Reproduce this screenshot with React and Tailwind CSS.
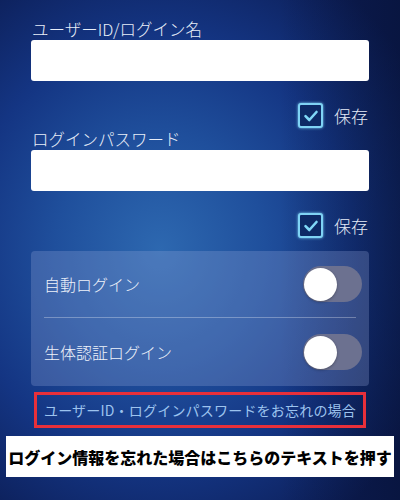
import React from "react";

function Check() {
  return (
    <div className="w-[25px] h-[25px] rounded-[3px] border-2 border-[#7fd3f5] bg-[#0d2a66] flex items-center justify-center shadow-[0_0_3px_#7fd3f5]">
      <svg width="16" height="16" viewBox="0 0 16 16" fill="none">
        <path d="M2.5 8.2 L6.3 12 L13.5 4" stroke="#7fd8f7" strokeWidth="2.6" strokeLinecap="round" strokeLinejoin="round" />
      </svg>
    </div>
  );
}

function SaveRow() {
  return (
    <div className="flex justify-end items-center gap-[11px] pr-[32px]">
      <Check />
      <span className="text-[17px] text-[#e6ecf7] leading-none font-light">保存</span>
    </div>
  );
}

function Toggle() {
  return (
    <div className="w-[59px] h-[36px] rounded-full bg-[#6c7190] flex items-center pl-[1px]">
      <div className="w-[33px] h-[33px] rounded-full bg-white shadow-[0_1px_3px_rgba(0,0,0,0.3)]" />
    </div>
  );
}

export default function App() {
  return (
    <div
      className="w-[400px] h-[500px] overflow-hidden relative bg-[radial-gradient(ellipse_300px_330px_at_160px_250px,#2d68b0_0%,#1f4f9c_35%,#143583_65%,#0c1d55_100%)]"
      style={{ fontFamily: '"Noto Sans CJK JP", "Noto Sans", sans-serif' }}
    >
      <div className="absolute inset-0 bg-[linear-gradient(90deg,rgba(0,0,0,0)_70%,rgba(5,12,40,0.45)_100%)]" />
      <div className="relative flex flex-col">
        <div className="pt-[18px] pl-[32px] text-[16.5px] leading-[22px] text-[#e8eef8] font-light">ユーザーID/ログイン名</div>
        <div className="mx-[31px] mt-[0px] h-[41px] bg-white rounded-[3px]" />
        <div className="mt-[22px]"><SaveRow /></div>
        <div className="mt-[0px] pl-[32px] text-[16.5px] leading-[22px] text-[#e8eef8] font-light">ログインパスワード</div>
        <div className="mx-[31px] mt-[0px] h-[41px] bg-white rounded-[3px]" />
        <div className="mt-[22px]"><SaveRow /></div>
        <div className="mx-[31px] mt-[13px] h-[135px] rounded-[4px] bg-[rgba(150,170,220,0.28)] flex flex-col px-[13px]">
          <div className="h-[66px] flex items-center justify-between">
            <span className="text-[16px] text-[#eef2fa] font-light">自動ログイン</span>
            <div className="-mr-[6px]"><Toggle /></div>
          </div>
          <div className="h-px bg-[rgba(255,255,255,0.3)]" />
          <div className="h-[68px] flex items-center justify-between">
            <span className="text-[16px] text-[#eef2fa] font-light">生体認証ログイン</span>
            <div className="-mr-[6px]"><Toggle /></div>
          </div>
        </div>
        <div className="mx-[34px] mt-[6px] h-[36px] border-[3px] border-[#e8303a] flex items-center justify-center">
          <span className="text-[14px] text-[#9cc3ee] tracking-[0.2px]">ユーザーID・ログインパスワードをお忘れの場合</span>
        </div>
        <div className="mx-[6px] mt-[8px] h-[41px] bg-white flex items-center justify-center">
          <span className="text-[16px] font-black text-black whitespace-nowrap">ログイン情報を忘れた場合はこちらのテキストを押す</span>
        </div>
      </div>
    </div>
  );
}
